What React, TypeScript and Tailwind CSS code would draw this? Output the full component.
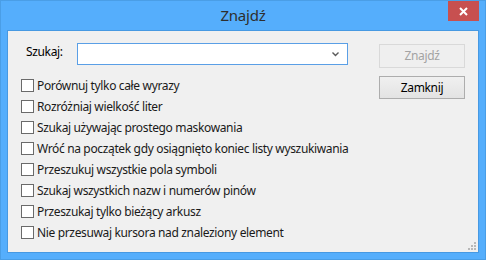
import React from "react";

const options = [
  "Porównuj tylko całe wyrazy",
  "Rozróżniaj wielkość liter",
  "Szukaj używając prostego maskowania",
  "Wróć na początek gdy osiągnięto koniec listy wyszukiwania",
  "Przeszukuj wszystkie pola symboli",
  "Szukaj wszystkich nazw i numerów pinów",
  "Przeszukaj tylko bieżący arkusz",
  "Nie przesuwaj kursora nad znaleziony element",
];

export default function App() {
  return (
    <div
      className="w-[486px] h-[260px] border border-[#4a9ee6] bg-[#55aefc] px-[6px] pb-[6px] flex flex-col"
      style={{ fontFamily: '"Noto Sans", "Open Sans", sans-serif' }}
    >
      <div className="h-[29px] grid grid-cols-[1fr_auto_1fr] items-start">
        <div />
        <div className="pt-[4px] text-[15px] leading-[20px] text-[#2e2e2e] tracking-[-0.2px]">Znajdź</div>
        <div className="flex justify-end">
          <div className="w-[31px] h-[20px] bg-[#c75050] flex items-center justify-center">
            <svg width="9" height="9" viewBox="0 0 9 9">
              <path d="M1 1 L8 8 M8 1 L1 8" stroke="#ffffff" strokeWidth="2" />
            </svg>
          </div>
        </div>
      </div>
      <div className="relative flex-1 border border-[#4799e2] bg-[#f0f0f0] flex text-[12px] leading-[16px] tracking-[-0.35px] text-[#000000]">
        <div className="w-[340px] shrink-0 flex flex-col pl-[13px] pt-[12px]">
          <div className="flex items-start">
            <div className="w-[56px] pl-[5px] pt-[1px]">Szukaj:</div>
            <div className="w-[271px] h-[22px] border border-[#5a9fe6] bg-white flex items-center justify-end pr-[8px]">
              <svg width="7" height="5" viewBox="0 0 7 5">
                <path d="M0.5 0.5 L3.5 3.5 L6.5 0.5" stroke="#5a5a5a" strokeWidth="1.4" fill="none" />
              </svg>
            </div>
          </div>
          <div className="mt-[10px] flex flex-col">
            {options.map((o) => (
              <div key={o} className="h-[21px] flex items-center">
                <div className="w-[13px] h-[13px] border border-[#6a6a6a] bg-white shrink-0" />
                <span className="ml-[3px] text-[#1a1a1a] whitespace-nowrap">{o}</span>
              </div>
            ))}
          </div>
        </div>
        <div className="ml-[31px] pt-[13px] flex flex-col gap-[8px]">
          <div className="w-[86px] h-[24px] border border-[#d9d9d9] bg-[#efefef] flex items-center justify-center text-[#a3a3a3]">
            Znajdź
          </div>
          <div className="w-[86px] h-[23px] border border-[#adadad] bg-gradient-to-b from-[#f0f0f0] to-[#e3e3e3] flex items-center justify-center text-[#000000]">
            Zamknij
          </div>
        </div>
        <svg className="absolute right-[2px] bottom-[2px]" width="8" height="8" viewBox="0 0 8 8">
          <rect x="6" y="0" width="2" height="2" fill="#b8b8b8" />
          <rect x="3" y="3" width="2" height="2" fill="#b8b8b8" />
          <rect x="6" y="3" width="2" height="2" fill="#b8b8b8" />
          <rect x="0" y="6" width="2" height="2" fill="#b8b8b8" />
          <rect x="3" y="6" width="2" height="2" fill="#b8b8b8" />
          <rect x="6" y="6" width="2" height="2" fill="#b8b8b8" />
        </svg>
      </div>
    </div>
  );
}
